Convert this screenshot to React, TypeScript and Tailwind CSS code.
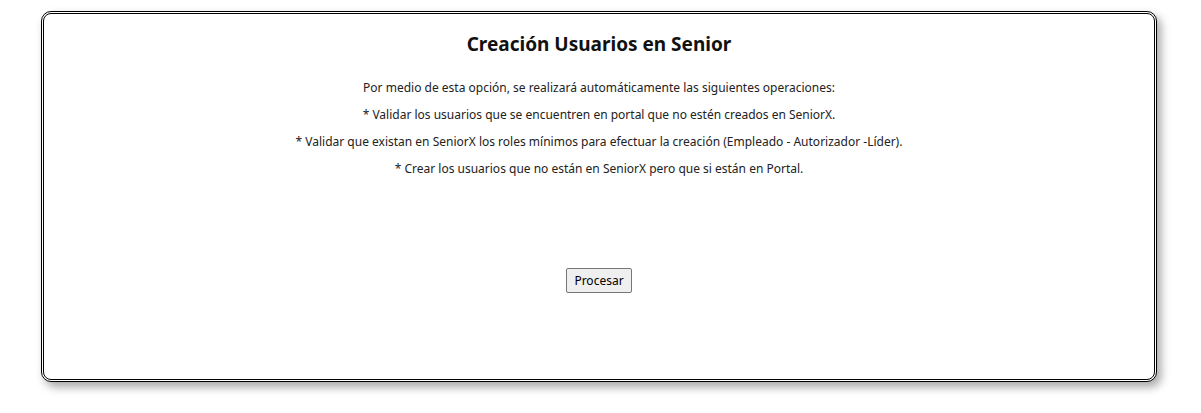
export default function App() {
  const lines = [
    "Por medio de esta opción, se realizará automáticamente las siguientes operaciones:",
    "* Validar los usuarios que se encuentren en portal que no estén creados en SeniorX.",
    "* Validar que existan en SeniorX los roles mínimos para efectuar la creación (Empleado - Autorizador -Líder).",
    "* Crear los usuarios que no están en SeniorX pero que si están en Portal.",
  ];
  return (
    <div className="min-h-[413px] w-[1201px] bg-white pt-[11px] pl-[41px] font-['Noto_Sans',sans-serif] text-[#222]">
      <div className="flex h-[371px] w-[1116px] flex-col items-center rounded-[10px] border-[3px] border-double border-black bg-white shadow-[4px_5px_10px_rgba(0,0,0,0.35)]">
        <h2 className="mt-[18px] text-[19px] font-bold leading-[24px] text-[#111]">
          Creación Usuarios en Senior
        </h2>
        <div className="mt-[23px] flex flex-col items-center gap-[9px] text-[12px] leading-[18px]">
          {lines.map((l) => (
            <p key={l}>{l}</p>
          ))}
        </div>
        <button className="mt-[90px] h-[25px] rounded-[2px] border border-[#767676] bg-[#efefef] px-[7px] text-[12px] text-black">
          Procesar
        </button>
      </div>
    </div>
  );
}
